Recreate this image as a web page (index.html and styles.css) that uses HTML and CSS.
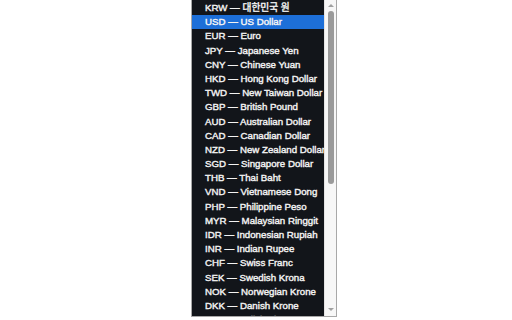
FILE: index.html
```html
<!DOCTYPE html>
<html>
<head>
<meta charset="utf-8">
<link rel="stylesheet" href="styles.css">
</head>
<body>
<div class="page">
  <div class="dropdown">
    <ul class="list">
      <li>KRW — 대한민국 원</li>
      <li class="sel">USD — US Dollar</li>
      <li>EUR — Euro</li>
      <li>JPY — Japanese Yen</li>
      <li>CNY — Chinese Yuan</li>
      <li>HKD — Hong Kong Dollar</li>
      <li>TWD — New Taiwan Dollar</li>
      <li>GBP — British Pound</li>
      <li>AUD — Australian Dollar</li>
      <li>CAD — Canadian Dollar</li>
      <li>NZD — New Zealand Dollar</li>
      <li>SGD — Singapore Dollar</li>
      <li>THB — Thai Baht</li>
      <li>VND — Vietnamese Dong</li>
      <li>PHP — Philippine Peso</li>
      <li>MYR — Malaysian Ringgit</li>
      <li>IDR — Indonesian Rupiah</li>
      <li>INR — Indian Rupee</li>
      <li>CHF — Swiss Franc</li>
      <li>SEK — Swedish Krona</li>
      <li>NOK — Norwegian Krone</li>
      <li>DKK — Danish Krone</li>
      <li>PLN — Polish Zloty</li>
    </ul>
    <div class="scrollbar">
      <div class="arrow up"></div>
      <div class="track"><div class="thumb"></div></div>
      <div class="arrow down"></div>
    </div>
  </div>
</div>
</body>
</html>
```
FILE: styles.css
```css
html, body {
  margin: 0;
  padding: 0;
  background: #ffffff;
}
.page {
  width: 512px;
  height: 320px;
  overflow: hidden;
  display: flex;
  justify-content: flex-start;
}
.dropdown {
  margin-left: 191px;
  width: 144px;
  height: 316px;
  border: 1px solid #a8a8a8;
  border-top: none;
  display: flex;
  overflow: hidden;
}
.list {
  list-style: none;
  margin: 0;
  padding: 1px 0 0 0;
  flex: 1;
  background: #12151a;
  overflow: hidden;
}
.list li {
  height: 14.2px;
  line-height: 14.2px;
  padding-left: 13px;
  font-family: "Liberation Sans", Arial, "Noto Sans CJK KR", sans-serif;
  font-size: 9.7px;
  font-weight: normal;
  -webkit-text-stroke: 0.4px #f2f2f2;
  color: #f2f2f2;
  white-space: nowrap;
}
.list li.sel {
  background: #1d6fd8;
  color: #ffffff;
}
.scrollbar {
  width: 11px;
  background: #f7f7f7;
  border-left: 1px solid #e4e4e4;
  display: flex;
  flex-direction: column;
  align-items: center;
}
.arrow {
  width: 0;
  height: 0;
  border-left: 3px solid transparent;
  border-right: 3px solid transparent;
}
.arrow.up {
  margin-top: 4px;
  border-bottom: 3px solid #a0a0a0;
}
.arrow.down {
  margin-bottom: 5px;
  border-top: 3px solid #a0a0a0;
}
.track {
  flex: 1;
  width: 100%;
  display: flex;
  justify-content: center;
  padding-top: 4px;
}
.thumb {
  width: 6px;
  height: 173px;
  border-radius: 3px;
  background: #9a9a9a;
}
```
